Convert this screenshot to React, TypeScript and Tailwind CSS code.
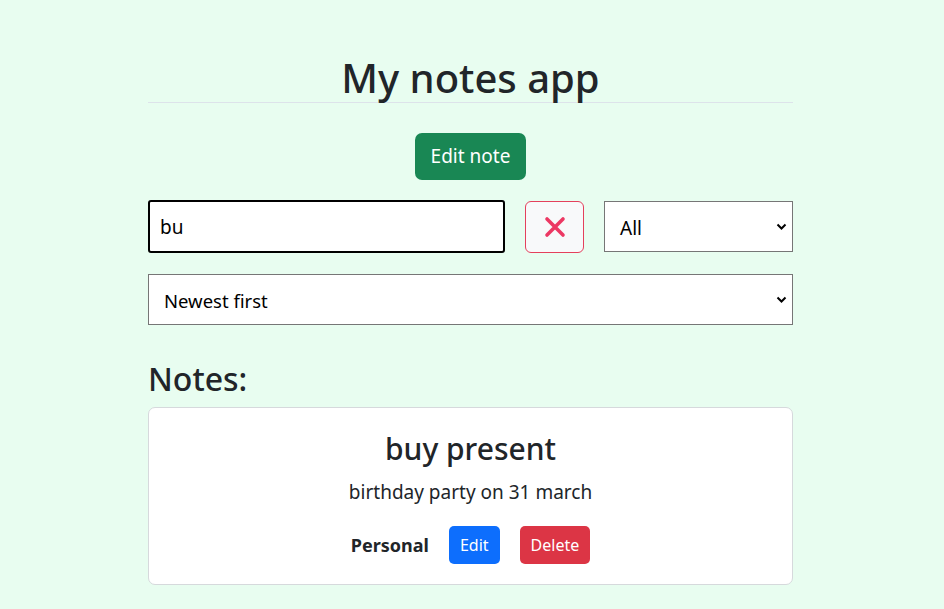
import React from "react";

export default function App() {
  return (
    <div className="min-h-[609px] w-full bg-[#e8fdf0] text-[#212529]" style={{ fontFamily: '"Noto Sans", "Open Sans", sans-serif' }}>
      <div className="ml-[148px] w-[645px] pt-[54px]">
        <h1 className="border-b border-[#dde3ea] text-center text-[40px] font-medium leading-[48px]">My notes app</h1>
        <div className="mt-[30px] flex justify-center">
          <button className="h-[47px] rounded-[7px] bg-[#198754] px-[16px] text-[19px] text-white">Edit note</button>
        </div>
        <div className="mt-[20px] flex items-center">
          <input
            readOnly
            value="bu"
            className="h-[53px] w-[357px] rounded-[3px] border-2 border-black bg-white px-[10px] pt-[1px] text-[19px] text-black outline-none"
          />
          <button className="ml-[20px] flex h-[52px] w-[59px] items-center justify-center rounded-[6px] border border-[#e4405c] bg-[#f8f9fa]">
            <svg width="22" height="22" viewBox="0 0 22 22">
              <path d="M3 3 L19 19 M19 3 L3 19" stroke="#ec3863" strokeWidth="3.6" strokeLinecap="round" />
            </svg>
          </button>
          <div className="relative ml-[20px] h-[51px] flex-1 border border-[#767676] bg-white">
            <span className="absolute left-[15px] top-[12px] text-[19px] text-black">All</span>
            <svg className="absolute right-[5px] top-[21px]" width="11" height="8" viewBox="0 0 11 8">
              <path d="M1.5 1.5 L5.5 5.5 L9.5 1.5" stroke="#000" strokeWidth="2" fill="none" />
            </svg>
          </div>
        </div>
        <div className="relative mt-[21px] h-[51px] border border-[#767676] bg-white">
          <span className="absolute left-[15px] top-[12px] text-[18.5px] text-black">Newest first</span>
          <svg className="absolute right-[5px] top-[21px]" width="11" height="8" viewBox="0 0 11 8">
            <path d="M1.5 1.5 L5.5 5.5 L9.5 1.5" stroke="#000" strokeWidth="2" fill="none" />
          </svg>
        </div>
        <h2 className="mt-[34px] text-[32px] font-medium leading-[40px]">Notes:</h2>
        <div className="mt-[8px] rounded-[7px] border border-[#d6d9dc] bg-white pb-[20px] pt-[22px] text-center">
          <h3 className="text-[30px] font-medium leading-[38px]">buy present</h3>
          <p className="mt-[11px] text-[19px] leading-[26px]">birthday party on 31 march</p>
          <div className="mt-[21px] flex items-center justify-center gap-[20px]">
            <span className="text-[18px] font-bold">Personal</span>
            <button className="h-[38px] rounded-[5px] bg-[#0d6efd] px-[11px] text-[16px] text-white">Edit</button>
            <button className="h-[38px] rounded-[5px] bg-[#dc3545] px-[11px] text-[16px] text-white">Delete</button>
          </div>
        </div>
      </div>
    </div>
  );
}
